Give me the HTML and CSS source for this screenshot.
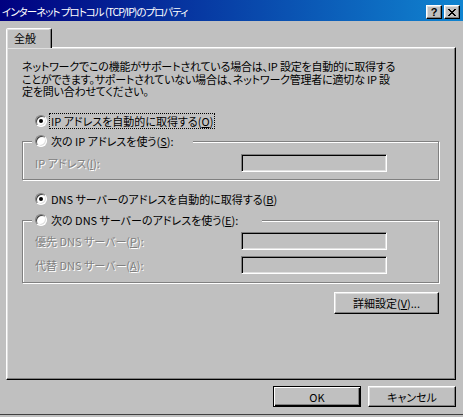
FILE: index.html
```html
<!DOCTYPE html>
<html lang="ja">
<head>
<meta charset="utf-8">
<title>インターネット プロトコル (TCP/IP)のプロパティ</title>
<link rel="stylesheet" href="styles.css">
</head>
<body>
<div class="window">
  <div class="titlebar">
    <span class="title">インターネット プロトコル (TCP/IP)のプロパティ</span>
    <div class="cap-btns">
      <span class="cap-btn help">?</span>
      <span class="cap-btn close"><svg width="8" height="7" viewBox="0 0 8 7" shape-rendering="crispEdges"><path d="M0 0h2v1H0zM6 0h2v1H6zM1 1h2v1H1zM5 1h2v1H5zM2 2h4v1H2zM3 3h2v1H3zM2 4h4v1H2zM1 5h2v1H1zM5 5h2v1H5zM0 6h2v1H0zM6 6h2v1H6z" fill="#000"/></svg></span>
    </div>
  </div>
  <div class="tabs"><div class="tab">全般</div></div>
  <div class="panel">
    <p class="desc">ネットワークでこの機能がサポートされている場合は、IP 設定を自動的に取得する<br>ことができます。サポートされていない場合は、ネットワーク管理者に適切な IP 設<br>定を問い合わせてください。</p>

    <div class="opt opt-first">
      <span class="radio on"></span><span class="lbl focus">IP アドレスを自動的に取得する(<u>O</u>)</span>
    </div>

    <div class="group group-ip">
      <div class="grp-head head-ip"><span class="radio"></span><span class="lbl">次の IP アドレスを使う(<u>S</u>):</span></div>
      <div class="field">
        <span class="dis">IP アドレス(<u>I</u>):</span>
        <span class="tb"></span>
      </div>
    </div>

    <div class="opt opt-dns">
      <span class="radio on"></span><span class="lbl">DNS サーバーのアドレスを自動的に取得する(<u>B</u>)</span>
    </div>

    <div class="group group-dns">
      <div class="grp-head head-dns"><span class="radio"></span><span class="lbl">次の DNS サーバーのアドレスを使う(<u>E</u>):</span></div>
      <div class="field">
        <span class="dis">優先 DNS サーバー(<u>P</u>):</span>
        <span class="tb"></span>
      </div>
      <div class="field">
        <span class="dis">代替 DNS サーバー(<u>A</u>):</span>
        <span class="tb"></span>
      </div>
    </div>

    <div class="adv-row"><button class="btn adv">詳細設定(<u>V</u>)...</button></div>
  </div>
  <div class="footer">
    <button class="btn default">OK</button>
    <button class="btn">キャンセル</button>
  </div>
</div>
</body>
</html>
```

FILE: styles.css
```css
* { box-sizing: border-box; }
html, body { margin: 0; padding: 0; }
body {
  width: 463px;
  height: 417px;
  overflow: hidden;
  background: #c0c0c0;
  color: #000;
  font-family: "Noto Sans CJK JP", sans-serif;
  font-size: 11px;
  font-feature-settings: "palt";
}
.window {
  height: 415px;
  display: flex;
  flex-direction: column;
  border-bottom: 1px solid #404040;
}

/* title bar */
.titlebar {
  height: 21px;
  flex: none;
  display: flex;
  align-items: center;
  padding: 3px 3px 0 2px;
  background: linear-gradient(to right, #000080, #1084d0);
  color: #fff;
}
.title {
  flex: 1;
  white-space: nowrap;
  font-size: 10.5px;
  letter-spacing: -1px;
  line-height: 14px;
}
.cap-btns { display: flex; gap: 2px; }
.cap-btn {
  width: 16px;
  height: 14px;
  display: flex;
  align-items: center;
  justify-content: center;
  background: #c0c0c0;
  border: 1px solid;
  border-color: #fff #000 #000 #fff;
  box-shadow: inset -1px -1px #808080, inset 1px 1px #dfdfdf;
  color: #000;
}
.help {
  font-family: "Liberation Sans", sans-serif;
  font-weight: bold;
  font-size: 11px;
  line-height: 11px;
  padding-top: 1px;
}

/* tab */
.tabs {
  flex: none;
  display: flex;
  padding: 7px 0 0 6px;
}
.tab {
  position: relative;
  z-index: 1;
  width: 46px;
  height: 20px;
  margin-bottom: -1px;
  padding-left: 7px;
  line-height: 18px;
  background: #c0c0c0;
  border: 1px solid;
  border-bottom: 0;
  border-color: #fff #000 transparent #fff;
  border-radius: 2px 2px 0 0;
  box-shadow: inset -1px 0 #808080, inset 1px 1px #dfdfdf;
}

/* panel */
.panel {
  flex: none;
  width: 450px;
  height: 333px;
  margin-left: 6px;
  padding: 0 16px 0 15px;
  display: flex;
  flex-direction: column;
  border: 1px solid;
  border-color: #fff #000 #000 #fff;
  box-shadow: inset -1px -1px #808080, inset 1px 1px #dfdfdf;
}
.desc {
  margin: 12px 0 0 0;
  line-height: 12.5px;
  letter-spacing: -0.2px;
  white-space: nowrap;
}

.opt {
  height: 20px;
  display: flex;
  align-items: center;
  padding-left: 13px;
}
.opt-first { margin-top: 13px; }
.opt-dns { margin-top: 9px; }

.radio {
  position: relative;
  flex: none;
  width: 12px;
  height: 12px;
  margin-right: 2px;
  border-radius: 50%;
  background: #fff;
  border: 1px solid;
  border-color: #808080 #fff #fff #808080;
  box-shadow: inset 1px 1px #404040, inset -1px -1px #dfdfdf;
}
.radio.on::after {
  content: "";
  position: absolute;
  left: 3px;
  top: 3px;
  width: 4px;
  height: 4px;
  border-radius: 50%;
  background: #000;
}
.lbl {
  line-height: 14px;
  padding: 0 1px;
  border: 1px dotted transparent;
  white-space: nowrap;
}
.lbl.focus { border-color: #000; }

/* group boxes */
.group {
  position: relative;
  border: 1px solid #808080;
  box-shadow: inset 1px 1px #fff, 1px 1px #fff;
  padding-left: 12px;
  display: flex;
  flex-direction: column;
  gap: 6px;
}
.group-ip { margin-top: 10px; padding-top: 12px; padding-bottom: 7px; }
.group-dns { margin-top: 11px; padding-top: 11px; padding-bottom: 8px; }
.grp-head {
  position: absolute;
  top: -11px;
  left: 9px;
  height: 20px;
  padding-left: 3px;
  display: flex;
  align-items: center;
  background: #c0c0c0;
}
.head-ip { width: 161px; }
.head-dns { width: 230px; }

.field {
  display: grid;
  grid-template-columns: 206px 146px;
  align-items: center;
  height: 18px;
}
.dis {
  color: #808080;
  text-shadow: 1px 1px #fff;
  white-space: nowrap;
}
.tb {
  height: 18px;
  background: #c0c0c0;
  border: 1px solid;
  border-color: #808080 #fff #fff #808080;
  box-shadow: inset 1px 1px #000, inset -1px -1px #dfdfdf;
}

/* buttons */
.btn {
  width: 88px;
  height: 21px;
  padding: 0;
  font: inherit;
  color: #000;
  background: #c0c0c0;
  border: 1px solid;
  border-color: #fff #000 #000 #fff;
  box-shadow: inset -1px -1px #808080, inset 1px 1px #dfdfdf;
  white-space: nowrap;
}
.btn.default {
  border-color: #000;
  box-shadow: inset 1px 1px #fff, inset -1px -1px #000, inset -2px -2px #808080;
}
.adv-row {
  display: flex;
  justify-content: flex-end;
  margin-top: 9px;
}
.btn.adv { width: 105px; height: 22px; }

.footer {
  flex: none;
  display: flex;
  justify-content: flex-end;
  gap: 7px;
  padding: 6px 7px 0 0;
}
```
